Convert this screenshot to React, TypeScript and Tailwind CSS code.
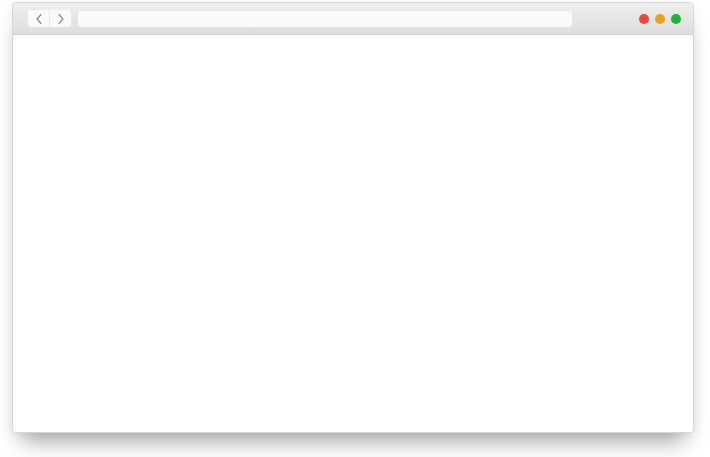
import React from 'react';

function Chevron({ dir }: { dir: 'left' | 'right' }) {
  return (
    <svg width="8" height="12" viewBox="0 0 8 12" fill="none">
      <path
        d={dir === 'left' ? 'M6 1.5 L2 6 L6 10.5' : 'M2 1.5 L6 6 L2 10.5'}
        stroke="#8a8a8a"
        strokeWidth="1.2"
        strokeLinecap="round"
        strokeLinejoin="round"
      />
    </svg>
  );
}

export default function App() {
  return (
    <div className="w-[710px] h-[457px] bg-white pl-[12px] pt-[2px]">
      <div className="w-[682px] h-[431px] rounded-[4px] border border-[#d6d6d6] bg-white overflow-hidden flex flex-col shadow-[0_18px_22px_-10px_rgba(0,0,0,0.35),0_2px_14px_rgba(0,0,0,0.07)]">
        {/* title bar */}
        <div className="h-[32px] flex items-center pl-[15px] pr-[12px] bg-gradient-to-b from-[#efefef] to-[#dddddd] border-b border-[#d2d2d2]">
          <div className="flex gap-[1px]">
            <button className="w-[21px] h-[17px] bg-[#fafafa] rounded-l-[3px] flex items-center justify-center">
              <Chevron dir="left" />
            </button>
            <button className="w-[21px] h-[17px] bg-[#fafafa] rounded-r-[3px] flex items-center justify-center">
              <Chevron dir="right" />
            </button>
          </div>
          <div className="ml-[7px] w-[494px] h-[16px] rounded-[3px] bg-[#fafafa]" />
          <div className="ml-auto flex gap-[6px]">
            <span className="w-[10px] h-[10px] rounded-full bg-[#e64940]" />
            <span className="w-[10px] h-[10px] rounded-full bg-[#e4a423]" />
            <span className="w-[10px] h-[10px] rounded-full bg-[#1fb236]" />
          </div>
        </div>
        <div className="flex-1 bg-white" />
      </div>
    </div>
  );
}
